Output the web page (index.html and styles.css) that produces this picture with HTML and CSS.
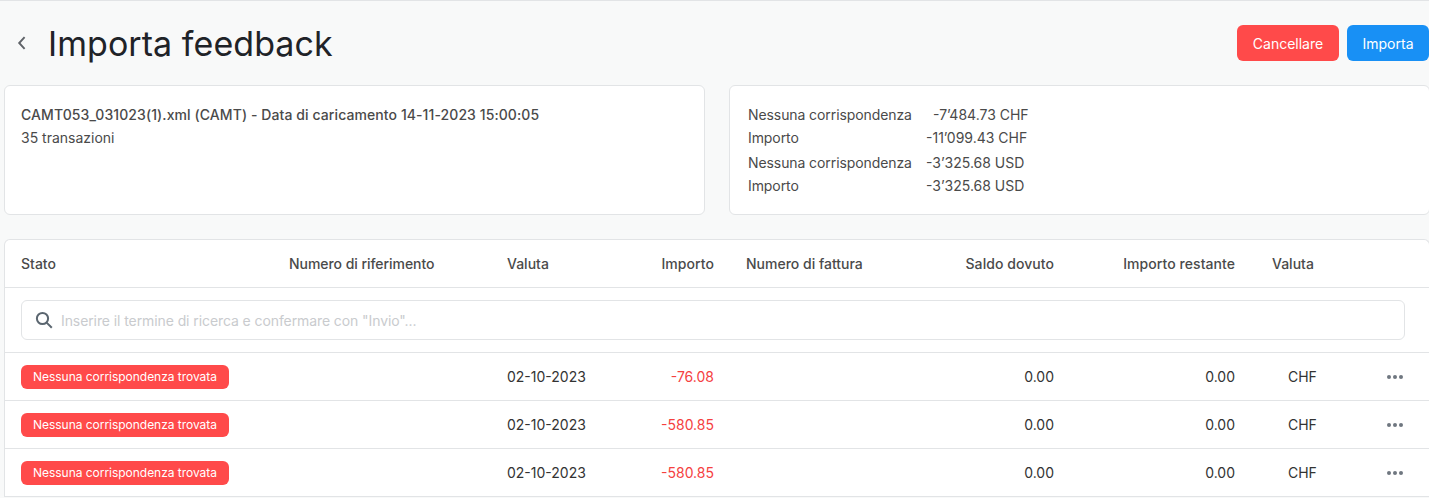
FILE: index.html
```html
<!DOCTYPE html>
<html lang="it">
<head>
    <meta charset="UTF-8">
    <title>Importa feedback</title>
    <link rel="stylesheet" href="styles.css">
</head>
<body>
    <header class="top">
        <div class="title">
            <svg class="back" width="10" height="14" viewBox="0 0 10 14"><path d="M7.6 1.2 L2.2 7 L7.6 12.8" fill="none" stroke="#5f6368" stroke-width="1.9"/></svg>
            <h1>Importa feedback</h1>
        </div>
        <div class="actions">
            <button type="button" class="btn red">Cancellare</button>
            <button type="button" class="btn blue">Importa</button>
        </div>
    </header>

    <section class="cards">
        <div class="card file">
            <p class="name">CAMT053_031023(1).xml (CAMT) - Data di caricamento 14-11-2023 15:00:05</p>
            <p>35 transazioni</p>
        </div>
        <div class="card totals">
            <div class="total"><span>Nessuna corrispondenza</span><span class="amount shift">-7’484.73 CHF</span></div>
            <div class="total"><span>Importo</span><span class="amount">-11’099.43 CHF</span></div>
            <div class="total next"><span>Nessuna corrispondenza</span><span class="amount">-3’325.68 USD</span></div>
            <div class="total"><span>Importo</span><span class="amount">-3’325.68 USD</span></div>
        </div>
    </section>

    <section class="list">
        <div class="row head">
            <div>Stato</div>
            <div class="ref">Numero di riferimento</div>
            <div>Valuta</div>
            <div class="right">Importo</div>
            <div class="invoice">Numero di fattura</div>
            <div class="right">Saldo dovuto</div>
            <div class="right">Importo restante</div>
            <div class="cur-head">Valuta</div>
            <div></div>
        </div>
        <div class="search-row">
            <div class="search">
                <svg width="18" height="18" viewBox="0 0 18 18"><circle cx="7.5" cy="7.5" r="5.6" fill="none" stroke="#5b6670" stroke-width="2"/><path d="M11.6 11.6 L16.8 16.8" stroke="#5b6670" stroke-width="2"/></svg>
                <span>Inserire il termine di ricerca e confermare con "Invio"...</span>
            </div>
        </div>
        <div class="row">
            <div><span class="tag">Nessuna corrispondenza trovata</span></div>
            <div></div>
            <div>02-10-2023</div>
            <div class="right neg">-76.08</div>
            <div class="invoice"></div>
            <div class="right">0.00</div>
            <div class="right">0.00</div>
            <div class="cur">CHF</div>
            <div class="dots"><i></i><i></i><i></i></div>
        </div>
        <div class="row">
            <div><span class="tag">Nessuna corrispondenza trovata</span></div>
            <div></div>
            <div>02-10-2023</div>
            <div class="right neg">-580.85</div>
            <div class="invoice"></div>
            <div class="right">0.00</div>
            <div class="right">0.00</div>
            <div class="cur">CHF</div>
            <div class="dots"><i></i><i></i><i></i></div>
        </div>
        <div class="row">
            <div><span class="tag">Nessuna corrispondenza trovata</span></div>
            <div></div>
            <div>02-10-2023</div>
            <div class="right neg">-580.85</div>
            <div class="invoice"></div>
            <div class="right">0.00</div>
            <div class="right">0.00</div>
            <div class="cur">CHF</div>
            <div class="dots"><i></i><i></i><i></i></div>
        </div>
    </section>
</body>
</html>
```
FILE: styles.css
```css
*{
    margin: 0px;
    padding: 0px;
    box-sizing: border-box;
}
html, body{
    height: 498px;
    overflow: hidden;
}
body{
    background-color: #f8f9f9;
    border-top: 1px solid #e2e4e6;
    font-family: Inter, "Liberation Sans", sans-serif;
    font-size: 14px;
    color: #4a4a4a;
    padding-left: 4px;
}

.top{
    display: flex;
    justify-content: space-between;
    align-items: center;
    height: 84px;
}
.title{
    display: flex;
    align-items: center;
}
.back{
    margin-left: 13px;
    margin-right: 21px;
}
h1{
    font-size: 34px;
    font-weight: 400;
    letter-spacing: 0.06px;
    color: #1f2328;
}
.actions{
    display: flex;
    gap: 8px;
}
.btn{
    height: 36px;
    border: 0px;
    border-radius: 6px;
    color: #fff;
    font-family: inherit;
    font-size: 14px;
}
.red{
    width: 102px;
    background-color: #ff4a4a;
}
.blue{
    width: 82px;
    background-color: #1890f5;
}

.cards{
    display: flex;
    gap: 24px;
    margin-right: -1px;
}
.card{
    height: 130px;
    background-color: #fff;
    border: 1px solid #e2e4e6;
    border-radius: 6px;
    line-height: 23px;
}
.file{
    width: 701px;
    padding: 17px 16px;
}
.name{
    font-weight: 500;
    letter-spacing: 0.085px;
}
.totals{
    flex: 1;
    padding: 17px 18px;
}
.total{
    display: flex;
}
.total.next{
    margin-top: 2px;
}
.total span:first-child{
    width: 178px;
    letter-spacing: -0.09px;
}
.shift{
    margin-left: 7px;
}

.list{
    margin-top: 24px;
    margin-right: -1px;
    background-color: #fff;
    border: 1px solid #e2e4e6;
    border-bottom: 0px;
    border-radius: 6px 6px 0px 0px;
}
/* stato, riferimento, valuta, importo, fattura, saldo, restante, valuta, azioni */
.row{
    display: grid;
    grid-template-columns: 284px 218px 100px 107px 186px 154px 181px 95px 1fr;
    align-items: center;
    height: 48px;
    border-bottom: 1px solid #e2e4e6;
    color: #333;
}
.row > div:first-child{
    padding-left: 16px;
}
.head{
    font-weight: 500;
    color: #4a4a4a;
}
.head .ref{
    letter-spacing: -0.05px;
}
.head .right{
    letter-spacing: 0.06px;
}
.right{
    text-align: right;
}
.invoice{
    padding-left: 32px;
}
.neg{
    color: #f5413f;
}
.cur-head{
    padding-left: 37px;
}
.cur{
    padding-left: 53px;
    letter-spacing: -0.1px;
}
.dots{
    display: flex;
    justify-content: flex-end;
    gap: 2px;
    padding-right: 26px;
}
.dots i{
    width: 4px;
    height: 4px;
    border-radius: 50%;
    background-color: #6f7780;
}
.tag{
    display: inline-block;
    height: 24px;
    line-height: 24px;
    padding: 0px 12px;
    border-radius: 6px;
    background-color: #ff4a4a;
    color: #fff;
    font-size: 12px;
    letter-spacing: -0.03px;
}

.search-row{
    padding: 12px 24px 12px 16px;
    height: 65px;
    border-bottom: 1px solid #e2e4e6;
}
.search{
    display: flex;
    align-items: center;
    gap: 8px;
    height: 40px;
    padding-left: 13px;
    border: 1px solid #e2e4e6;
    border-radius: 6px;
    color: #c9cbce;
    letter-spacing: -0.09px;
}
```
